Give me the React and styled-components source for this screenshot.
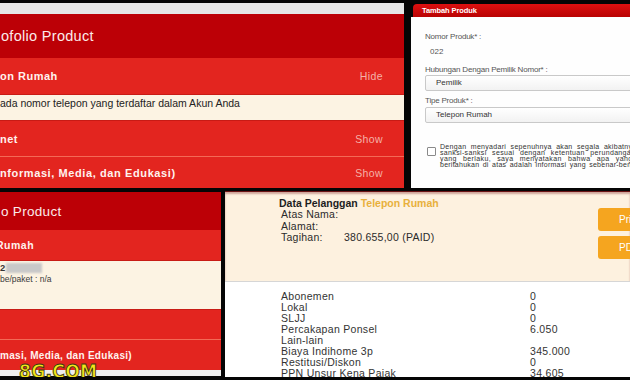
import React from 'react';
import styled, { createGlobalStyle } from 'styled-components';

const GlobalStyle = createGlobalStyle`
  html, body {
    margin: 0;
    padding: 0;
    background: #050505;
  }
  body {
    font-family: "Liberation Sans", Arial, sans-serif;
  }
`;

const Collage = styled.div`
  width: 630px;
  height: 380px;
  box-sizing: border-box;
  padding-bottom: 3px;
  background: #050505;
  overflow: hidden;
  display: grid;
  grid-template-rows: 188px 186px;
  row-gap: 3px;
`;

const ShotRow = styled.div`
  display: grid;
  grid-template-columns: ${p => p.$columns};
  column-gap: ${p => p.$gap}px;
  min-height: 0;
  overflow: hidden;
`;

/* ---------- portfolio (red accordion) screenshots ---------- */

const PortfolioShot = styled.div`
  position: relative;
  display: flex;
  flex-direction: column;
  min-width: 0;
  overflow: hidden;
`;

const BrowserStrip = styled.div`
  height: 11px;
  margin-top: 3px;
  flex-shrink: 0;
  background: #e6e6e6;
`;

const PortfolioHeader = styled.div`
  height: ${p => p.$h}px;
  flex-shrink: 0;
  margin-top: ${p => p.$top || 0}px;
  background: #bc0006;
  display: flex;
  align-items: center;
  padding-left: 1px;
  font-size: ${p => p.$size}px;
  letter-spacing: 0.3px;
  color: #fbeaea;
  white-space: nowrap;
`;

const ProductRow = styled.div`
  height: ${p => p.$h}px;
  flex-shrink: 0;
  box-sizing: border-box;
  background: #e3251f;
  border-top: ${p => (p.$divider ? '1px solid #f36a56' : '0')};
  display: flex;
  align-items: center;
  justify-content: space-between;
  padding: 0 21px 0 0;
`;

const RowTitle = styled.span`
  font-weight: 700;
  font-size: ${p => p.$size || 11}px;
  letter-spacing: ${p => (p.$track === undefined ? 0.5 : p.$track)}px;
  color: #fff2ee;
  white-space: nowrap;
  margin-left: ${p => p.$shift || 0}px;
`;

const Toggle = styled.span`
  font-size: 10.5px;
  letter-spacing: 0.4px;
  color: #f5b2a8;
`;

const ProductBody = styled.div`
  height: ${p => p.$h}px;
  flex-shrink: 0;
  box-sizing: border-box;
  background: #fcf3e3;
  border-top: 1px solid #c81b15;
  border-bottom: 1px solid #c81b15;
  padding-top: ${p => p.$padTop}px;
  color: #222;
  white-space: nowrap;
`;

const BodyText = styled.div`
  font-size: 10.5px;
  line-height: 12px;
`;

const MaskedNumber = styled.div`
  display: flex;
  align-items: center;
  height: 11px;
  font-size: 9.5px;
  font-weight: 700;
  color: #333;
`;

const Redacted = styled.span`
  display: inline-block;
  width: 36px;
  height: 10px;
  margin-left: 1px;
  background: #c8c8c8;
  filter: blur(0.8px);
`;

const SmallNote = styled.div`
  margin-top: 1px;
  font-size: 8.5px;
  line-height: 11px;
  color: #3a3a3a;
`;

const PageEdge = styled.div`
  height: 6px;
  flex-shrink: 0;
  background: #eeeeee;
`;

const Watermark = styled.span`
  position: absolute;
  left: 19px;
  top: 171px;
  font-family: "DejaVu Sans Condensed", "Liberation Sans Narrow", sans-serif;
  font-weight: 700;
  font-size: 19px;
  line-height: 19px;
  letter-spacing: 0.3px;
  color: #f3e61a;
  -webkit-text-stroke: 0.9px #3d3a10;
`;

/* ---------- "Tambah Produk" form screenshot ---------- */

const FormShot = styled.div`
  display: flex;
  flex-direction: column;
  min-width: 0;
  overflow: hidden;
`;

const FormHeader = styled.div`
  height: 13px;
  flex-shrink: 0;
  margin: 4px 0 0 2px;
  border-top-left-radius: 4px;
  background: linear-gradient(#dd1010, #b90303);
  padding-left: 9px;
  font-size: 7.5px;
  font-weight: 700;
  line-height: 13px;
  letter-spacing: -0.1px;
  color: #fff;
  white-space: nowrap;
`;

const FormBody = styled.div`
  flex: 1;
  background: #fefefe;
  padding: 15px 0 0 14px;
  display: flex;
  flex-direction: column;
  white-space: nowrap;
`;

const FieldLabel = styled.div`
  margin-top: ${p => p.$top || 0}px;
  font-size: 8px;
  line-height: 10px;
  letter-spacing: -0.2px;
  color: #555;
`;

const FieldValue = styled.div`
  margin-top: 5px;
  padding-left: 5px;
  font-size: 8px;
  line-height: 10px;
  color: #555;
`;

const SelectBox = styled.div`
  height: 16px;
  box-sizing: border-box;
  margin-top: ${p => p.$top || 0}px;
  width: 240px;
  border: 1px solid #c9c9c9;
  border-radius: 2px;
  background: linear-gradient(#ffffff, #f2f2f2);
  padding-left: 10px;
  font-size: 8px;
  line-height: 14px;
  color: #333;
`;

const Consent = styled.div`
  margin-top: 21px;
  display: flex;
  gap: 4px;
`;

const CheckBox = styled.span`
  width: 7px;
  height: 7px;
  margin: 3px 0 0 2px;
  flex-shrink: 0;
  border: 1px solid #8a8a8a;
  border-radius: 1px;
  background: #fff;
`;

const ConsentText = styled.div`
  font-size: 7px;
  line-height: 6px;
  color: #333;
`;

const ConsentLine = styled.div`
  word-spacing: ${p => p.$spread}px;
  letter-spacing: ${p => p.$track}px;
`;

/* ---------- bill detail screenshot ---------- */

const BillShot = styled.div`
  display: flex;
  flex-direction: column;
  min-width: 0;
  overflow: hidden;
  background: #ffffff;
`;

const Summary = styled.div`
  height: 91px;
  flex-shrink: 0;
  box-sizing: border-box;
  display: grid;
  grid-template-columns: 373px 90px;
  background: #fdf1df;
  border-top: 1px solid #6b1414;
  box-shadow: inset 0 2px 2px rgba(120, 20, 20, 0.35);
  border-bottom: 1px solid #d6d6d6;
  color: #222;
`;

const CustomerInfo = styled.div`
  padding: 5px 0 0 54px;
  font-size: 10.5px;
  white-space: nowrap;
`;

const CustomerTitle = styled.div`
  font-weight: 700;
  line-height: 12px;
  color: #1e1e1e;
`;

const Highlight = styled.span`
  color: #e8b03c;
`;

const InfoRow = styled.div`
  display: grid;
  grid-template-columns: 63px auto;
  padding-left: 2px;
  line-height: 11.6px;
  letter-spacing: 0.25px;
  color: #2b2b2b;
`;

const ButtonStack = styled.div`
  display: flex;
  flex-direction: column;
  gap: 5px;
  padding-top: 16px;
`;

const ActionButton = styled.div`
  height: 23px;
  border-radius: 3px;
  background: #f5a51f;
  padding-left: 21px;
  font-size: 10px;
  line-height: 23px;
  color: #fff;
`;

const ChargeList = styled.div`
  padding: 9px 0 0 56px;
  display: grid;
  grid-template-columns: 249px auto;
  font-size: 10.5px;
  line-height: 11px;
  letter-spacing: 0.3px;
  color: #333;
  white-space: nowrap;
`;

const charges = [
  ['Abonemen', '0'],
  ['Lokal', '0'],
  ['SLJJ', '0'],
  ['Percakapan Ponsel', '6.050'],
  ['Lain-lain', ''],
  ['Biaya Indihome 3p', '345.000'],
  ['Restitusi/Diskon', '0'],
  ['PPN Unsur Kena Pajak', '34.605'],
];

const App = () => {
  return (
    <>
      <GlobalStyle />
      <Collage>
        <ShotRow $columns="404px 219px" $gap={7}>
          <PortfolioShot>
            <BrowserStrip />
            <PortfolioHeader $h={44} $size={14.5}>ofolio Product</PortfolioHeader>
            <ProductRow $h={36}>
              <RowTitle>on Rumah</RowTitle>
              <Toggle>Hide</Toggle>
            </ProductRow>
            <ProductBody $h={27} $padTop={2}>
              <BodyText>ada nomor telepon yang terdaftar dalam Akun Anda</BodyText>
            </ProductBody>
            <ProductRow $h={35}>
              <RowTitle>net</RowTitle>
              <Toggle>Show</Toggle>
            </ProductRow>
            <ProductRow $h={33} $divider>
              <RowTitle $track={0.6}>nformasi, Media, dan Edukasi)</RowTitle>
              <Toggle>Show</Toggle>
            </ProductRow>
          </PortfolioShot>

          <FormShot>
            <FormHeader>Tambah Produk</FormHeader>
            <FormBody>
              <FieldLabel>Nomor Produk* :</FieldLabel>
              <FieldValue>022</FieldValue>
              <FieldLabel $top={8}>Hubungan Dengan Pemilik Nomor* :</FieldLabel>
              <SelectBox>Pemilik</SelectBox>
              <FieldLabel $top={5}>Tipe Produk* :</FieldLabel>
              <SelectBox $top={1}>Telepon Rumah</SelectBox>
              <Consent>
                <CheckBox />
                <ConsentText>
                  <ConsentLine $spread={2.2} $track={0.3}>Dengan menyadari sepenuhnya akan segala akibatnya</ConsentLine>
                  <ConsentLine $spread={3.2} $track={0.35}>sanksi-sanksi sesuai dengan ketentuan perundangan</ConsentLine>
                  <ConsentLine $spread={3.8} $track={0.4}>yang berlaku, saya menyatakan bahwa apa yang telah saya</ConsentLine>
                  <ConsentLine $spread={1.2} $track={0.25}>beritahukan di atas adalah informasi yang sebenar-benarnya</ConsentLine>
                </ConsentText>
              </Consent>
            </FormBody>
          </FormShot>
        </ShotRow>

        <ShotRow $columns="221px 405px" $gap={4}>
          <PortfolioShot>
            <PortfolioHeader $h={38} $top={1} $size={13.5}>o Product</PortfolioHeader>
            <ProductRow $h={30}>
              <RowTitle $size={10.5} $shift={-4}>Rumah</RowTitle>
            </ProductRow>
            <ProductBody $h={50} $padTop={1}>
              <MaskedNumber>
                2<Redacted />
              </MaskedNumber>
              <SmallNote>be/paket : n/a</SmallNote>
            </ProductBody>
            <ProductRow $h={29} />
            <ProductRow $h={31} $divider>
              <RowTitle $size={10} $track={0.3}>masi, Media, dan Edukasi)</RowTitle>
            </ProductRow>
            <PageEdge />
            <Watermark>8G.COM</Watermark>
          </PortfolioShot>

          <BillShot>
            <Summary>
              <CustomerInfo>
                <CustomerTitle>
                  Data Pelanggan <Highlight>Telepon Rumah</Highlight>
                </CustomerTitle>
                <InfoRow>
                  <span>Atas Nama:</span>
                  <span />
                </InfoRow>
                <InfoRow>
                  <span>Alamat:</span>
                  <span />
                </InfoRow>
                <InfoRow>
                  <span>Tagihan:</span>
                  <span>380.655,00 (PAID)</span>
                </InfoRow>
              </CustomerInfo>
              <ButtonStack>
                <ActionButton>Print</ActionButton>
                <ActionButton>PDF</ActionButton>
              </ButtonStack>
            </Summary>
            <ChargeList>
              {charges.map(([label, value]) => (
                <React.Fragment key={label}>
                  <span>{label}</span>
                  <span>{value}</span>
                </React.Fragment>
              ))}
            </ChargeList>
          </BillShot>
        </ShotRow>
      </Collage>
    </>
  );
};

export default App;
